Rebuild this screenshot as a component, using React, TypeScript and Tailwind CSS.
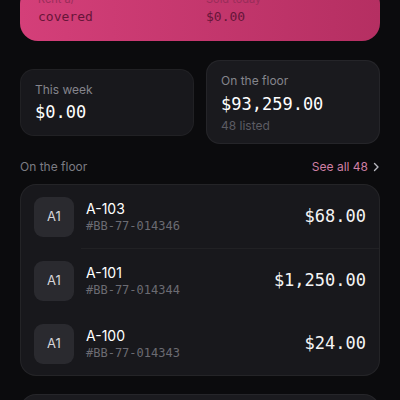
const mono = "font-['DejaVu_Sans_Mono','Liberation_Mono',monospace]";

const rows = [
  { name: "A-103", sku: "#BB-77-014346", price: "$68.00" },
  { name: "A-101", sku: "#BB-77-014344", price: "$1,250.00" },
  { name: "A-100", sku: "#BB-77-014343", price: "$24.00" },
];

export default function App() {
  return (
    <div className="h-[400px] w-[400px] overflow-hidden bg-[#0b0b0d] px-5 font-['Inter','Liberation_Sans',sans-serif]">
      {/* hero card, scrolled mostly out of view */}
      <div className="-mt-[14px] rounded-[18px] bg-gradient-to-r from-[#d43f79] to-[#b52f62] px-[18px] pb-[15px] pt-[6px]">
        <div className="grid grid-cols-2 gap-x-3">
          <div>
            <p className="text-[11px] leading-[14px] text-[#9a2d5a]">Rent a/</p>
            <p className={`${mono} mt-[2px] text-[13px] leading-[18px] text-[#661539]`}>covered</p>
          </div>
          <div>
            <p className="text-[11px] leading-[14px] text-[#9a2d5a]">Sold today</p>
            <p className={`${mono} mt-[2px] text-[13px] leading-[18px] text-[#661539]`}>$0.00</p>
          </div>
        </div>
      </div>

      <div className="mt-[19px] grid grid-cols-2 items-center gap-3">
        <div className="rounded-[14px] border border-white/[0.04] bg-[#18181c] px-[14px] py-[12px]">
          <p className="text-[12px] leading-[16px] text-[#85858c]">This week</p>
          <p className={`${mono} mt-[3px] text-[17px] leading-[22px] text-white`}>$0.00</p>
        </div>
        <div className="rounded-[14px] border border-white/[0.05] bg-[#1a1a1e] px-[14px] pb-[9px] pt-[12px]">
          <p className="text-[12px] leading-[16px] text-[#85858c]">On the floor</p>
          <p className={`${mono} mt-[4px] text-[17px] leading-[22px] text-white`}>$93,259.00</p>
          <p className="mt-[3px] text-[12px] leading-[16px] text-[#5c5c63]">48 listed</p>
        </div>
      </div>

      <div className="mt-[15px] flex items-center justify-between">
        <p className="text-[12px] leading-[16px] text-[#7c7c83]">On the floor</p>
        <p className="flex items-center gap-[5px] text-[12px] leading-[16px] text-[#cf7fa4]">
          See all 48
          <svg width="7" height="10" viewBox="0 0 7 10" fill="none" stroke="#b9b9c0" strokeWidth="1.4" strokeLinecap="round" strokeLinejoin="round">
            <path d="M1.5 1.5 5 5 1.5 8.5" />
          </svg>
        </p>
      </div>

      <div className="mt-[9px] rounded-[16px] border border-white/[0.05] bg-[#18181c]">
        {rows.map((r, i) => (
          <div key={r.name}>
            <div className="flex h-[63px] items-center px-[13px]">
              <div className="flex h-[40px] w-[40px] items-center justify-center rounded-[9px] bg-[#2a2a2f] text-[13px] text-[#d4d4d8]">
                A1
              </div>
              <div className="ml-[12px] flex-1">
                <p className="text-[14px] leading-[18px] text-white">{r.name}</p>
                <p className={`${mono} text-[12px] leading-[16px] text-[#6b6b72]`}>{r.sku}</p>
              </div>
              <p className={`${mono} text-[17px] text-[#f4f4f5]`}>{r.price}</p>
            </div>
            {i === 0 && <div className="ml-[60px] h-px bg-white/[0.04]" />}
          </div>
        ))}
      </div>

      <div className="mt-[18px] h-[40px] rounded-[16px] border border-white/[0.05] bg-[#1b1b1f]" />
    </div>
  );
}
